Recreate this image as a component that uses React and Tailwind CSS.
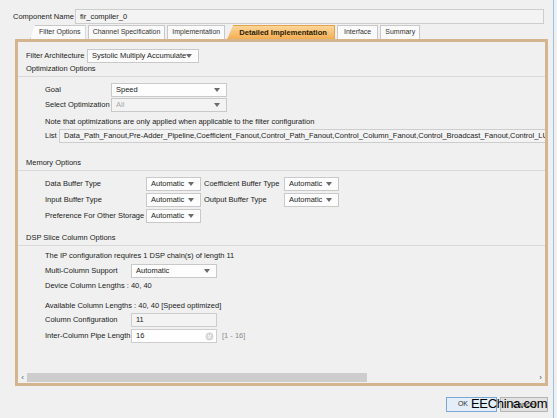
import React from "react";

const Arrow = () => (
  <svg width="6" height="4" viewBox="0 0 6 4" className="shrink-0">
    <path d="M0 0 L6 0 L3 4 Z" fill="#6b6b6b" />
  </svg>
);

const Select = ({ value, className = "", disabled = false }) => (
  <div
    className={`flex items-center justify-between shrink-0 h-[14px] border border-[#c9c9c9] pl-[4px] pr-[6px] ${
      disabled ? "bg-[#f3f3f3] text-[#a8a8a8]" : "bg-[#fdfdfd] text-[#222]"
    } ${className}`}
  >
    <span className="leading-none whitespace-nowrap">{value}</span>
    <Arrow />
  </div>
);

const Field = ({ value, className = "", white = false, children }) => (
  <div
    className={`flex items-center shrink-0 h-[14px] border border-[#cdcdcd] pl-[4px] ${
      white ? "bg-white" : "bg-[#f3f3f3]"
    } ${className}`}
  >
    <span className="leading-none whitespace-nowrap">{value}</span>
    {children}
  </div>
);

const Label = ({ children, className = "" }) => (
  <span className={`shrink-0 whitespace-nowrap ${className}`}>{children}</span>
);

const Header = ({ children, className = "" }) => (
  <div className={className}>
    <div className="h-[12px] pl-[8px] leading-[12px] whitespace-nowrap">{children}</div>
    <div className="h-px bg-[#d9d9d9] mt-[1px]" />
  </div>
);

const Tab = ({ label, className = "", active = false }) => (
  <div
    className={`h-[14px] flex items-center border border-b-0 whitespace-nowrap ${
      active
        ? "bg-gradient-to-b from-[#fcd69a] to-[#f4ad4f] border-[#e4a24d] font-bold text-[#2a1a00]"
        : "bg-[#fbfbfb] border-[#c8c8c8] text-[#333]"
    } ${className}`}
  >
    {label}
  </div>
);

export default function App() {
  return (
    <div className="w-[557px] h-[418px] bg-[#f0f0f0] relative overflow-hidden text-[7.5px] text-[#222] [font-family:'Liberation_Sans',Arial,sans-serif]">
      <div className="flex">
        <div className="w-[553px]">
          {/* component name */}
          <div className="flex items-center pt-[9px] pl-[13px] pr-[9px]">
            <Label className="w-[62px]">Component Name</Label>
            <Field value="fir_compiler_0" className="flex-1 h-[15px]" />
          </div>

          {/* tabs */}
          <div className="flex gap-[2px] pl-[30px] mt-[1px] text-[7px]">
            <Tab
              label="Filter Options"
              className="pl-[8px] pr-[4px] [clip-path:polygon(5px_0,100%_0,100%_100%,0_100%)]"
            />
            <Tab label="Channel Specification" className="px-[4px]" />
            <Tab label="Implementation" className="px-[4px]" />
            <Tab
              label="Detailed Implementation"
              active
              className="pl-[11px] pr-[7px] text-[7.6px] [clip-path:polygon(6px_0,100%_0,100%_100%,0_100%)]"
            />
            <Tab label="Interface" className="px-[6px]" />
            <Tab label="Summary" className="px-[4px]" />
          </div>

          {/* panel */}
          <div className="ml-[15px] w-[533px] h-[347px] border-[3px] border-[#d5b58f] flex flex-col overflow-hidden">
            <div className="flex-1 overflow-hidden">
              <div className="flex items-center mt-[7px] pl-[8px]">
                <Label className="w-[61px]">Filter Architecture</Label>
                <Select value="Systolic Multiply Accumulate" className="w-[112px]" />
              </div>

              <Header>Optimization Options</Header>

              <div className="pl-[27px]">
                <div className="flex items-center mt-[6px]">
                  <Label className="w-[66px]">Goal</Label>
                  <Select value="Speed" className="w-[116px]" />
                </div>
                <div className="flex items-center mt-[1px]">
                  <Label className="w-[66px]">Select Optimization</Label>
                  <Select value="All" className="w-[116px]" disabled />
                </div>
                <div className="h-[15px] leading-[15px] mt-[2px] whitespace-nowrap">
                  Note that optimizations are only applied when applicable to the filter configuration
                </div>
                <div className="flex items-center">
                  <Label className="w-[14px]">List</Label>
                  <Field
                    value="Data_Path_Fanout,Pre-Adder_Pipeline,Coefficient_Fanout,Control_Path_Fanout,Control_Column_Fanout,Control_Broadcast_Fanout,Control_LUT_Fanout"
                    className="w-[520px] overflow-hidden"
                  />
                </div>
              </div>

              <Header className="mt-[14px]">Memory Options</Header>

              <div className="pl-[27px] mt-[6px] grid grid-cols-[98px_55px_77px_55px] gap-x-[3px] gap-y-[2px] items-center w-fit">
                <Label>Data Buffer Type</Label>
                <Select value="Automatic" />
                <Label>Coefficient Buffer Type</Label>
                <Select value="Automatic" />
                <Label>Input Buffer Type</Label>
                <Select value="Automatic" />
                <Label>Output Buffer Type</Label>
                <Select value="Automatic" />
                <Label>Preference For Other Storage</Label>
                <Select value="Automatic" />
              </div>

              <Header className="mt-[9px]">DSP Slice Column Options</Header>

              <div className="pl-[27px]">
                <div className="h-[14px] leading-[14px] mt-[3px] whitespace-nowrap">
                  The IP configuration requires 1 DSP chain(s) of length 11
                </div>
                <div className="flex items-center mt-[1px]">
                  <Label className="w-[86px]">Multi-Column Support</Label>
                  <Select value="Automatic" className="w-[86px]" />
                </div>
                <div className="h-[15px] leading-[15px] whitespace-nowrap">Device Column Lengths : 40, 40</div>
                <div className="h-[15px] leading-[15px] mt-[5px] whitespace-nowrap">
                  Available Column Lengths : 40, 40 [Speed optimized]
                </div>
                <div className="flex items-center">
                  <Label className="w-[86px]">Column Configuration</Label>
                  <Field value="11" className="w-[86px]" />
                </div>
                <div className="flex items-center mt-[2px]">
                  <Label className="w-[86px]">Inter-Column Pipe Length</Label>
                  <Field value="16" white className="w-[86px] justify-between pr-[2px]">
                    <svg width="9" height="9" viewBox="0 0 9 9">
                      <circle cx="4.5" cy="4.5" r="4" fill="#d8d8d8" />
                      <path d="M3 3 L6 6 M6 3 L3 6" stroke="#fff" strokeWidth="1" />
                    </svg>
                  </Field>
                  <Label className="ml-[5px] text-[#8a8a8a]">[1 - 16]</Label>
                </div>
              </div>
            </div>

            {/* horizontal scrollbar */}
            <div className="h-[9px] flex items-center bg-[#f0f0f0] mb-[1px]">
              <span className="w-[9px] text-center text-[8px] leading-none text-[#555]">‹</span>
              <div className="w-[340px] h-[9px] bg-[#cdcdcd]" />
              <div className="flex-1" />
              <span className="w-[9px] text-center text-[8px] leading-none text-[#555]">›</span>
            </div>
          </div>

          {/* buttons */}
          <div className="flex justify-end gap-[3px] pr-[5px] mt-[11px]">
            <div className="w-[51px] h-[15px] border border-[#7aa7d6] bg-[#e3eef9] flex items-center justify-end pr-[28px] text-[7px] text-[#333]">
              OK
            </div>
            <div className="w-[48px] h-[15px] border border-[#b5b5b5] bg-[#e1e1e1] flex items-center justify-center text-[#333]">
              Cancel
            </div>
          </div>
        </div>
        <div className="w-px h-[418px] bg-[#9cc1e6]" />
      </div>

      {/* watermark */}
      <div className="absolute left-[471px] top-[395px] text-[13px] leading-[18px] text-black tracking-[-0.3px]">
        EEChina.com
      </div>
    </div>
  );
}
